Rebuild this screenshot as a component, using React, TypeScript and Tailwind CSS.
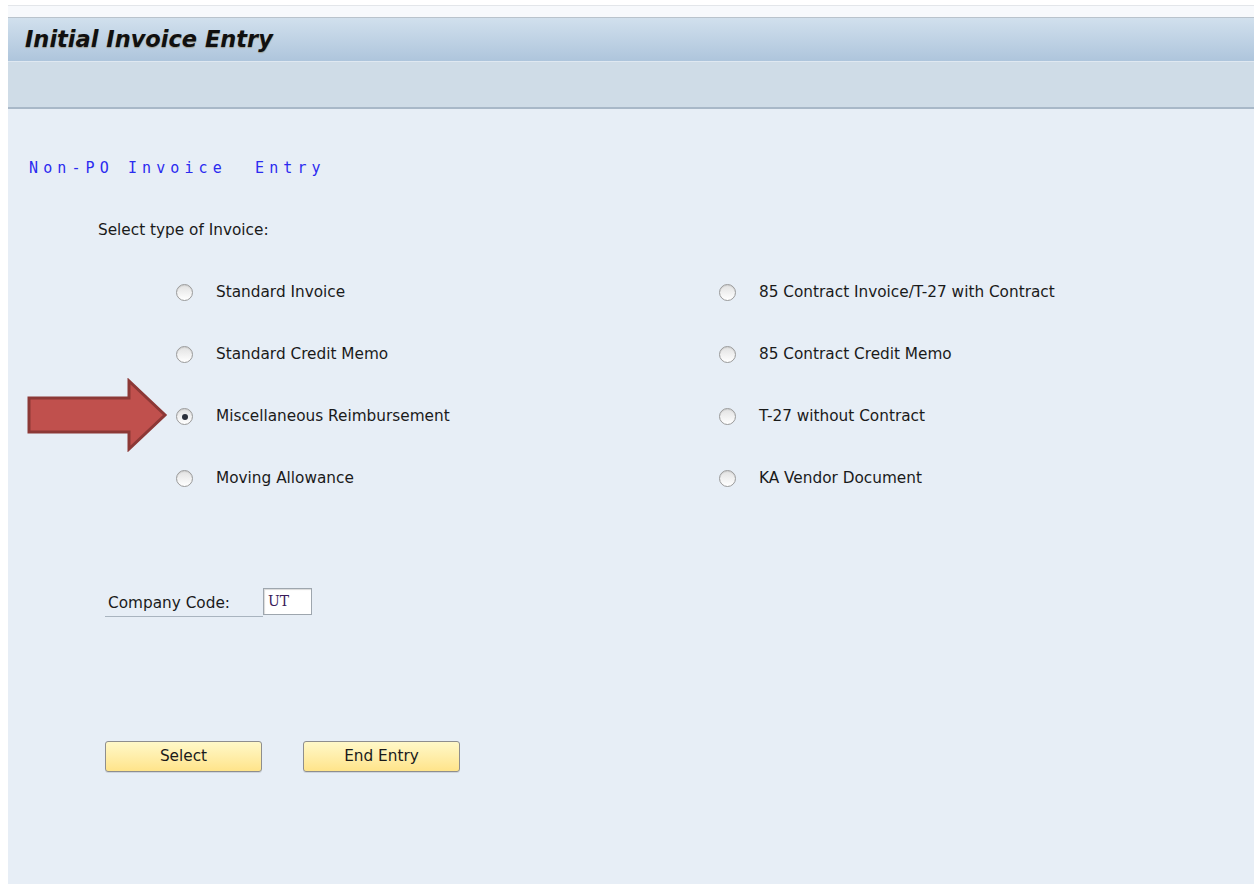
const left = [
  { label: "Standard Invoice" },
  { label: "Standard Credit Memo" },
  { label: "Miscellaneous Reimbursement", checked: true },
  { label: "Moving Allowance" },
];

const right = [
  { label: "85 Contract Invoice/T-27 with Contract" },
  { label: "85 Contract Credit Memo" },
  { label: "T-27 without Contract" },
  { label: "KA Vendor Document" },
];

function Radio({ checked }: { checked?: boolean }) {
  return (
    <span className="flex h-[17px] w-[17px] items-center justify-center rounded-full border border-[#9a9a9a] bg-gradient-to-b from-[#e2e2e2] to-white shadow-[inset_0_1px_1px_rgba(0,0,0,0.08)]">
      {checked && <span className="h-[6px] w-[6px] rounded-full bg-[#2a2f3a]" />}
    </span>
  );
}

function Option({ label, checked }: { label: string; checked?: boolean }) {
  return (
    <div className="flex h-[62px] items-center">
      <Radio checked={checked} />
      <span className="ml-[23px] text-[15.3px] text-[#1a1a1a]">{label}</span>
    </div>
  );
}

function SapButton({ children }: { children: string }) {
  return (
    <button className="h-[31px] w-[157px] rounded-[3px] border border-[#8e8e8e] bg-gradient-to-b from-[#fff8c8] to-[#ffe48a] text-[15.3px] text-[#1a1a1a] shadow-[0_1px_0_rgba(0,0,0,0.1)]">
      {children}
    </button>
  );
}

function Arrow() {
  return (
    <svg className="absolute left-[27px] top-[378px]" width="142" height="74" viewBox="0 0 142 74">
      <polygon
        points="2,20 102,20 102,3 138,37 102,71 102,54 2,54"
        fill="#c0504d"
        stroke="#8c3836"
        strokeWidth="3"
        strokeLinejoin="miter"
      />
    </svg>
  );
}

export default function App() {
  return (
    <div className="relative flex h-[884px] flex-col bg-white pl-[8px] font-['DejaVu_Sans',sans-serif]">
      {/* window chrome strip */}
      <div className="mt-[5px] h-[13px] border-t border-b border-t-[#e3e6ea] border-b-[#b9c3cc] bg-[#f7f9fc]" />

      {/* title bar */}
      <div className="flex h-[44px] items-center border-b border-[#dfe8f1] bg-gradient-to-b from-[#d1e0ed] to-[#aec5dc] pl-[17px]">
        <h1 className="text-[22.5px] font-bold italic text-[#101010] [text-shadow:0_1px_1px_rgba(120,80,0,0.35)]">
          Initial Invoice Entry
        </h1>
      </div>

      {/* application toolbar */}
      <div className="h-[47px] border-b-2 border-[#a8b8c8] bg-[#cfdce7]" />

      {/* screen body */}
      <div className="flex flex-1 flex-col bg-[#e7eef6]">
        <div className="ml-[21px] mt-[50px] font-['DejaVu_Sans_Mono',monospace] text-[15px] leading-[18px] tracking-[5.1px] text-[#2b2bf0]">
          Non-PO&nbsp;Invoice&nbsp;&nbsp;Entry
        </div>

        <div className="ml-[90px] mt-[42px] text-[15.3px] text-[#1a1a1a]">Select type of Invoice:</div>

        <div className="mt-[20px] flex">
          <div className="ml-[168px] flex w-[543px] flex-col">
            {left.map((o) => (
              <Option key={o.label} label={o.label} checked={o.checked} />
            ))}
          </div>
          <div className="flex flex-col">
            {right.map((o) => (
              <Option key={o.label} label={o.label} />
            ))}
          </div>
        </div>

        <div className="ml-[97px] mt-[78px] flex items-end">
          <div className="mb-[-2px] w-[158px] border-b border-[#a9b4bf] pb-[1px] pl-[3px] text-[15.3px] text-[#1a1a1a]">
            Company Code:
          </div>
          <div className="flex h-[27px] w-[49px] items-center border border-[#9ea6ae] bg-white pl-[4px] font-['DejaVu_Serif',serif] text-[14px] leading-[25px] text-[#3a1a5a] shadow-[inset_1px_1px_1px_rgba(0,0,0,0.15)]">
            UT
          </div>
        </div>

        <div className="ml-[97px] mt-[126px] flex gap-[41px]">
          <SapButton>Select</SapButton>
          <SapButton>End Entry</SapButton>
        </div>
      </div>

      <Arrow />
    </div>
  );
}
